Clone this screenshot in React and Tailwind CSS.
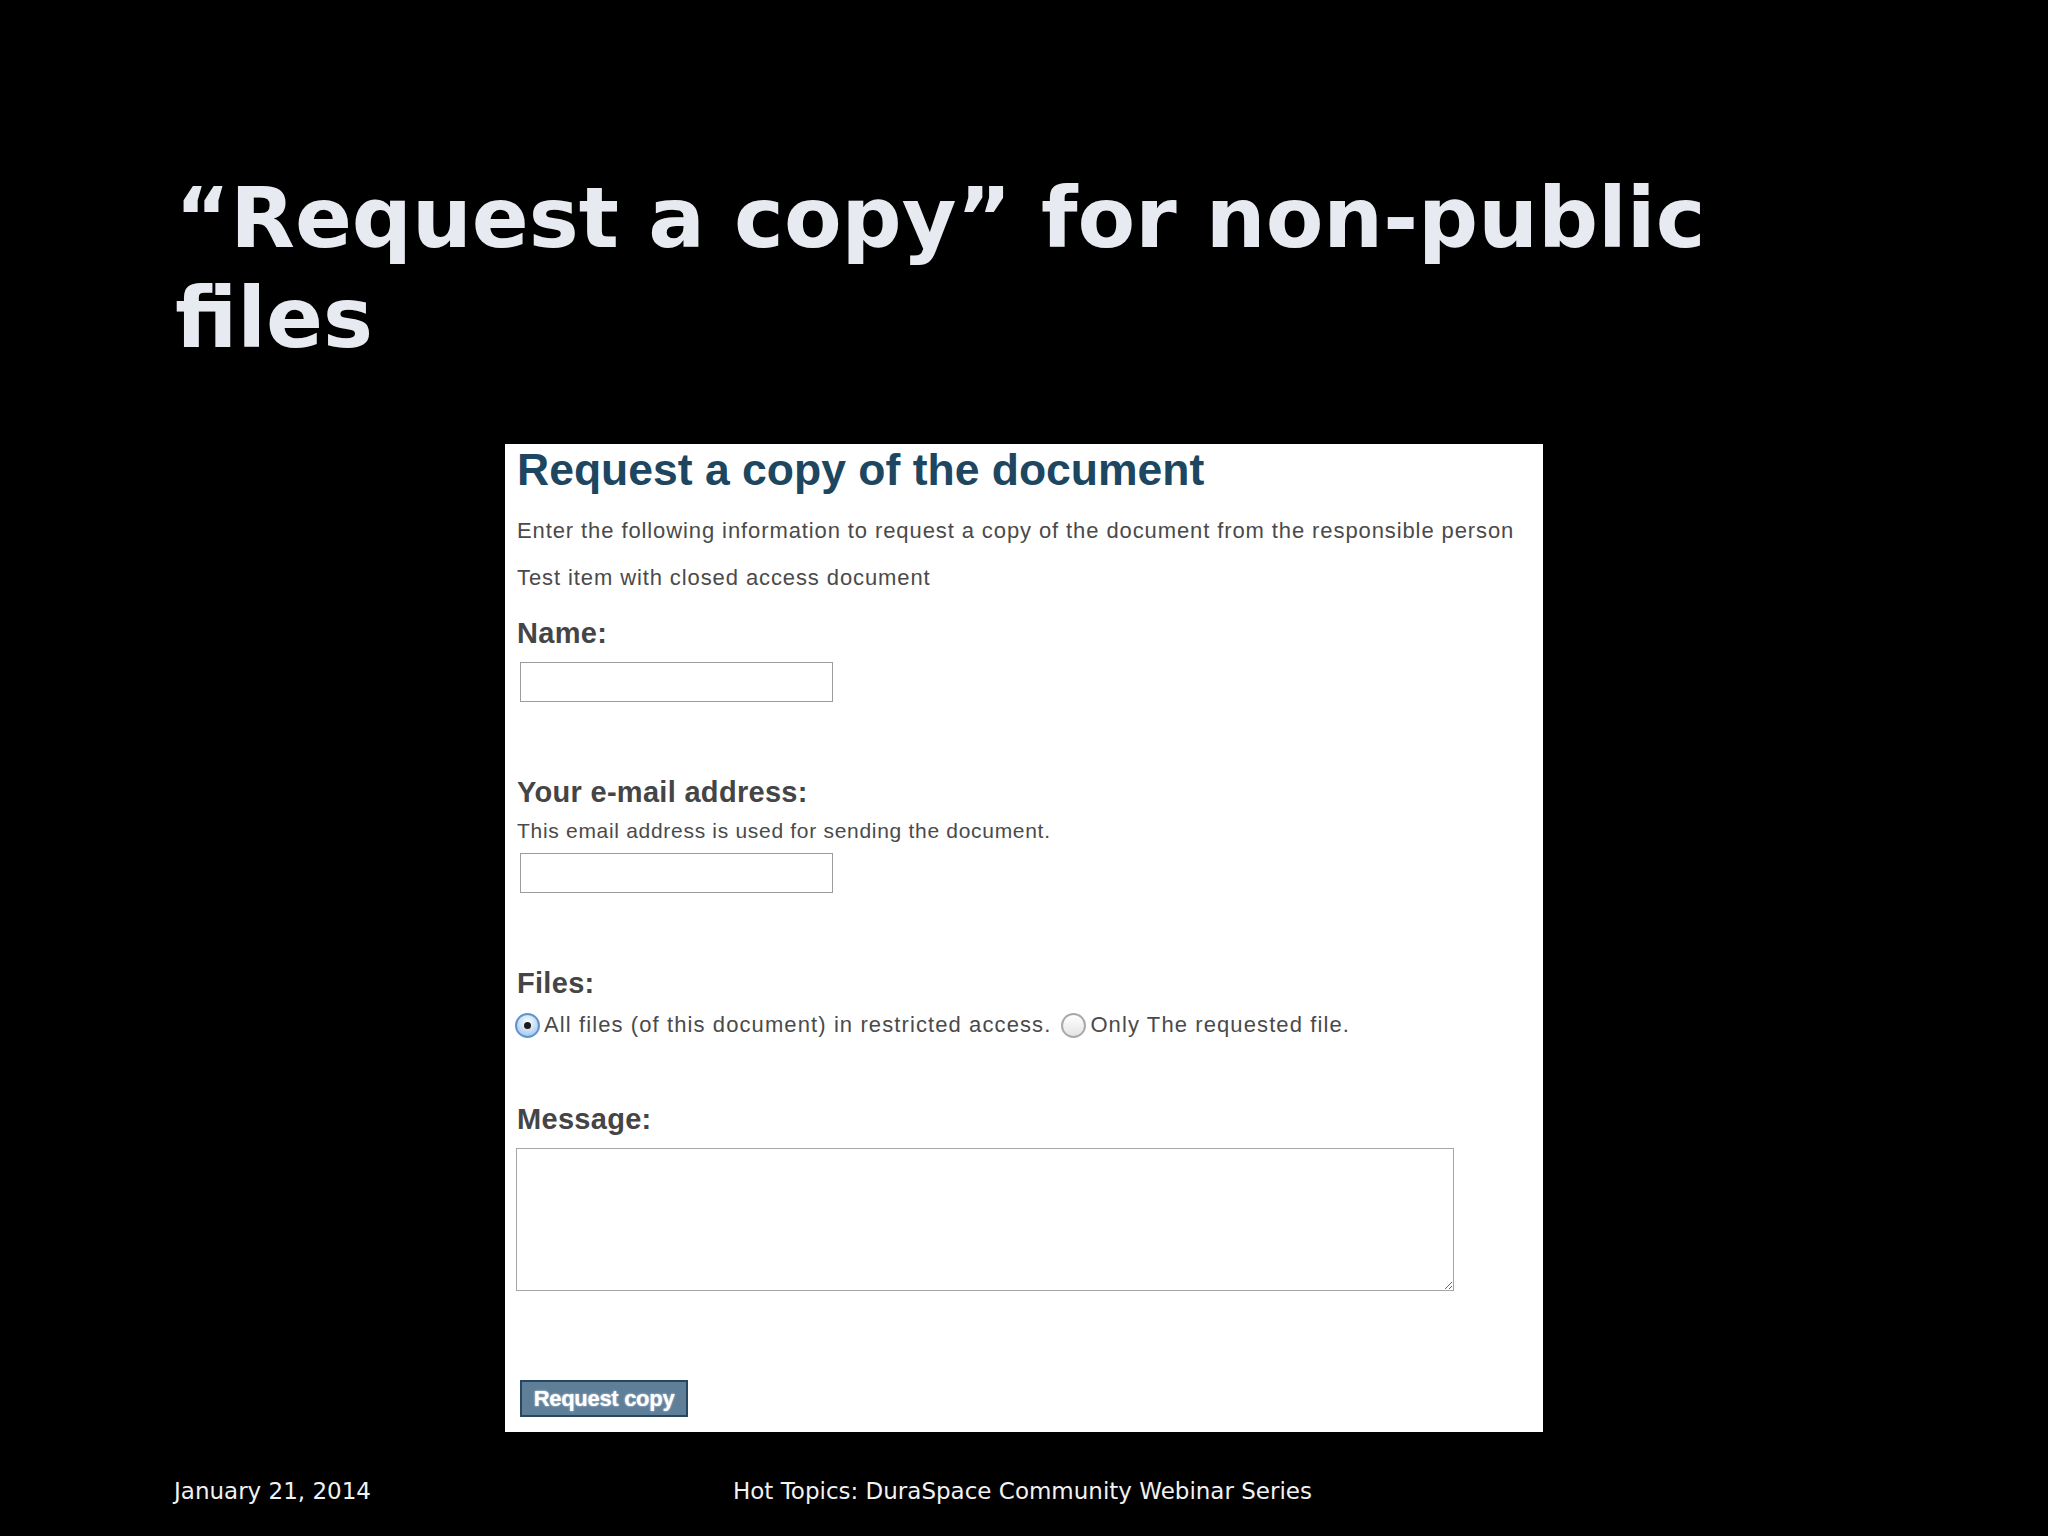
import React from 'react';

const sans = "font-['Liberation_Sans',Arial,sans-serif]";
const body = 'text-[22px] leading-[28px] tracking-[0.9px] text-[#4a4a4a]';

const Label = ({ children, className = '' }) => (
  <div className={`text-[29px] leading-[34px] font-bold tracking-[0.3px] text-[#454545] ${className}`}>{children}</div>
);

const Radio = ({ checked }) =>
  checked ? (
    <span className="flex h-[25px] w-[25px] shrink-0 items-center justify-center rounded-full border-2 border-[#5f95cc] bg-[radial-gradient(circle_at_50%_35%,#ffffff,#bcd8f4_60%,#8fb9e6)]">
      <span className="block h-[7px] w-[7px] rounded-full bg-[#1b1b1b]"></span>
    </span>
  ) : (
    <span className="block h-[25px] w-[25px] shrink-0 rounded-full border-2 border-[#a9a9a9] bg-[linear-gradient(#ffffff,#e4e4e4)]"></span>
  );

const RequestForm = () => (
  <div className={`ml-[505px] mt-[76px] h-[988px] w-[1038px] bg-white pl-[12px] pt-[1px] ${sans}`}>
    <h2 className="text-[44.5px] leading-[50px] font-bold text-[#1d4661]">Request a copy of the document</h2>

    <p className={`mt-[22px] ${body}`}>
      Enter the following information to request a copy of the document from the responsible person
    </p>
    <p className={`mt-[19px] ${body}`}>Test item with closed access document</p>

    <Label className="mt-[24px]">Name:</Label>
    <input type="text" className="ml-[3px] mt-[12px] block h-[40px] w-[313px] border border-[#9c9c9c] bg-white" />

    <Label className="mt-[73px]">Your e-mail address:</Label>
    <p className="mt-[8px] text-[21px] leading-[28px] tracking-[0.7px] text-[#4a4a4a]">
      This email address is used for sending the document.
    </p>
    <input type="text" className="ml-[3px] mt-[8px] block h-[40px] w-[313px] border border-[#9c9c9c] bg-white" />

    <Label className="mt-[73px]">Files:</Label>
    <div className="mt-[11px] flex h-[28px] items-center text-[22px] leading-[28px] tracking-[1.1px] text-[#4a4a4a]">
      <span className="-ml-[2px] flex"><Radio checked /></span>
      <span className="ml-[4px]">All files (of this document) in restricted access.</span>
      <span className="ml-[10px] flex"><Radio /></span>
      <span className="ml-[4px]">Only The requested file.</span>
    </div>

    <Label className="mt-[63px]">Message:</Label>
    <textarea className="-ml-[1px] mt-[12px] block h-[143px] w-[938px] border border-[#a6a6a6] bg-white"></textarea>

    <button className="ml-[3px] mt-[89px] block h-[37px] w-[168px] border-2 border-[#284660] bg-[#5f7f99] text-[22px] font-bold tracking-[-0.3px] text-white [text-shadow:0_0_2px_#dfe7ee]">
      Request copy
    </button>
  </div>
);

export default function App() {
  return (
    <div className="h-[1536px] w-[2048px] overflow-hidden bg-black">
      <h1 className="pl-[175px] pt-[168px] font-['DejaVu_Sans',Verdana,sans-serif] text-[84px] leading-[100px] font-bold text-[#e7ebf1]">
        “Request a copy” for non-public
        <br />
        files
      </h1>

      <RequestForm />

      <div className="mt-[47px] flex font-['DejaVu_Sans',Verdana,sans-serif] text-[23px] leading-[24px] text-[#f2f2f2]">
        <span className="ml-[174px] w-[559px]">January 21, 2014</span>
        <span>Hot Topics: DuraSpace Community Webinar Series</span>
      </div>
    </div>
  );
}
